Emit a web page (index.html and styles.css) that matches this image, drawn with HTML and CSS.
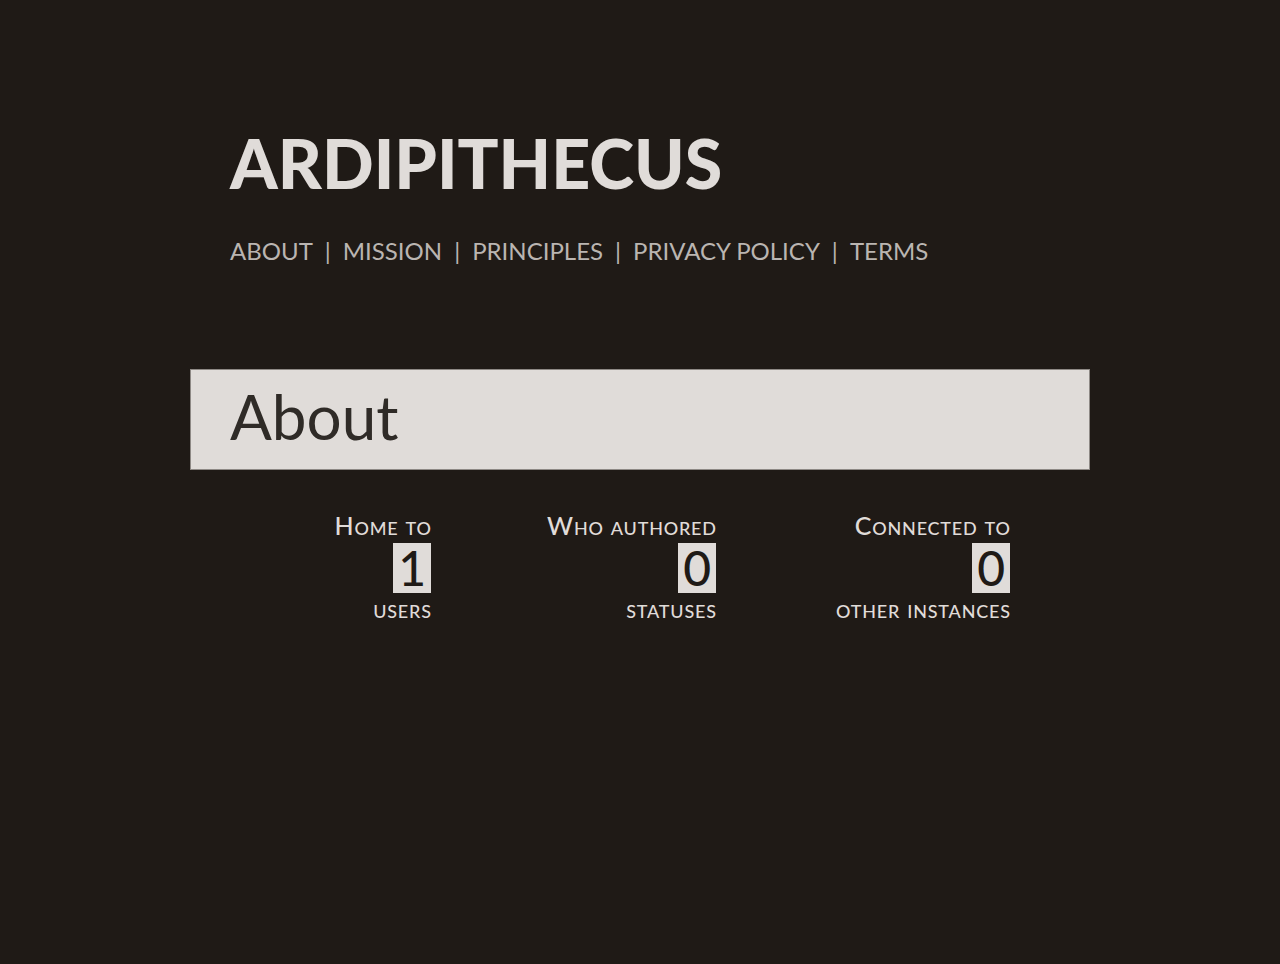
FILE: index.html
```html
<!DOCTYPE html>
<html lang="en">
<head>
<meta charset="utf-8">
<title>Ardipithecus</title>
<link rel="stylesheet" href="styles.css">
</head>
<body>
<div class="page">
  <header class="site-header">
    <h1 class="site-title">ARDIPITHECUS</h1>
    <nav class="site-nav">
      <a href="#">ABOUT</a><span class="sep">|</span><a href="#">MISSION</a><span class="sep">|</span><a href="#">PRINCIPLES</a><span class="sep">|</span><a href="#">PRIVACY POLICY</a><span class="sep">|</span><a href="#">TERMS</a>
    </nav>
  </header>
  <main>
    <h2 class="section-bar">About</h2>
    <div class="stats">
      <div class="stat">
        <div class="stat-label">Home to</div>
        <div class="stat-num"><span>1</span></div>
        <div class="stat-unit">users</div>
      </div>
      <div class="stat">
        <div class="stat-label">Who authored</div>
        <div class="stat-num"><span>0</span></div>
        <div class="stat-unit">statuses</div>
      </div>
      <div class="stat">
        <div class="stat-label">Connected to</div>
        <div class="stat-num"><span>0</span></div>
        <div class="stat-unit">other instances</div>
      </div>
    </div>
  </main>
</div>
</body>
</html>
```

FILE: styles.css
```css
html, body {
  margin: 0;
  padding: 0;
  background: #1f1a16;
}
body {
  font-family: Lato, "Open Sans", sans-serif;
  color: #e0dcd9;
  min-height: 964px;
}
.page {
  width: 900px;
  margin: 0 auto;
}
.site-header {
  padding: 121px 0 0 40px;
}
.site-title {
  margin: 0;
  font-size: 68px;
  font-weight: 900;
  line-height: 84px;
  color: #e0dcd9;
}
.site-nav {
  margin-top: 31px;
  font-size: 24px;
  line-height: 30px;
  color: #bab5b1;
  display: flex;
  align-items: baseline;
}
.site-nav a {
  color: #bab5b1;
  text-decoration: none;
}
.site-nav .sep {
  margin: 0 12px;
}
.section-bar {
  margin: 103px 0 0;
  box-sizing: border-box;
  height: 101px;
  padding: 14px 0 0 39px;
  background: #e0dcd9;
  border: 1px solid #8e8985;
  color: #2f2b27;
  font-size: 62px;
  font-weight: 400;
  line-height: 64px;
}
.stats {
  display: grid;
  grid-template-columns: 241px 285px 294px;
  margin-top: 41px;
}
.stat {
  text-align: right;
  font-variant: small-caps;
  font-size: 25px;
  font-weight: 500;
  line-height: 29px;
  letter-spacing: 0.8px;
  margin-right: -0.8px;
}
.stat-num {
  margin-top: 3px;
  line-height: 0;
}
.stat-num span {
  display: inline-block;
  background: #e0dcd9;
  color: #1f1a16;
  font-size: 48px;
  font-weight: 500;
  line-height: 50px;
  padding: 0 5px;
  margin-right: 0.8px;
  letter-spacing: 0;
  font-variant: normal;
}
.stat-unit {
  margin-top: 1px;
}
```
